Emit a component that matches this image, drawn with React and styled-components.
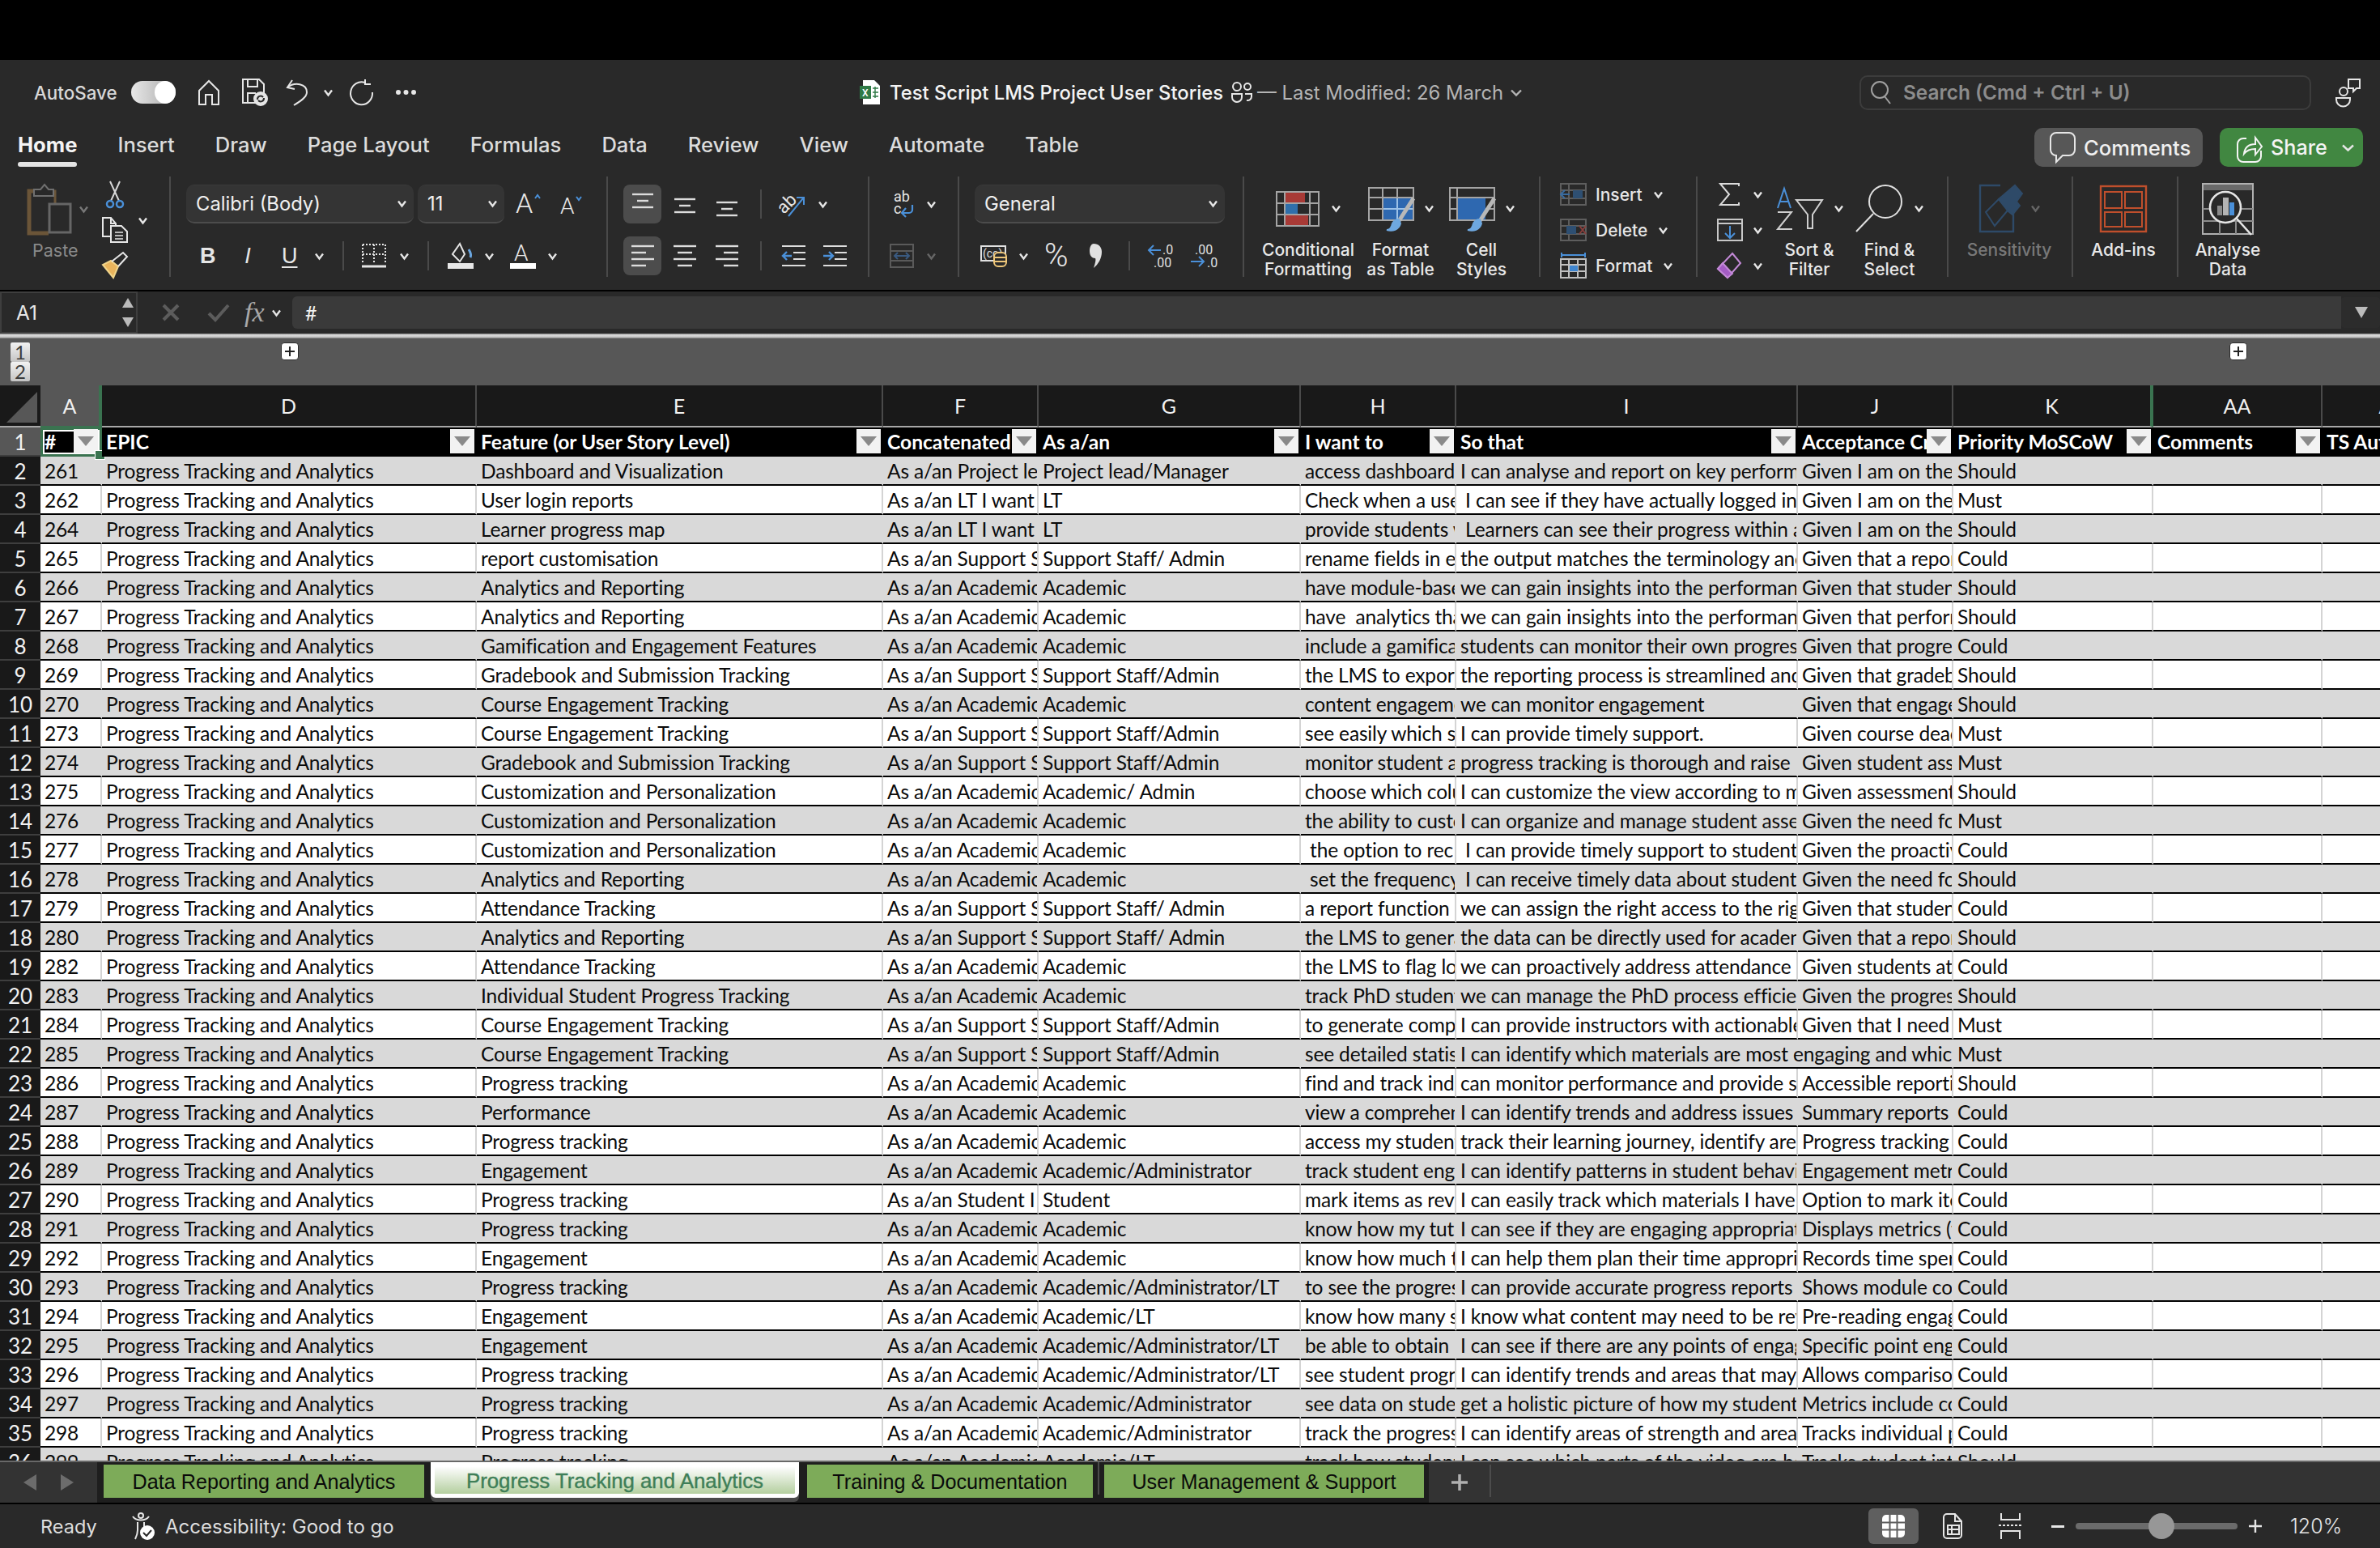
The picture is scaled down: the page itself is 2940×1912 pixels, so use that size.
import React from "react";
import styled, { createGlobalStyle } from "styled-components";

const COLUMNS = "50px 76px 463px 502px 192px 324px 192px 422px 192px 247px 209px 174px";
const UI_FONT = `Inter, "Noto Sans", sans-serif`;
const CELL_FONT = `Lato, "Noto Sans", sans-serif`;

const ac = "Academic";
const ss = "Support Staff/Admin";
const ss2 = "Support Staff/ Admin";
const aa = "Academic/Administrator";
const aal = "Academic/Administrator/LT";
const pt = "Progress tracking";
const cet = "Course Engagement Tracking";
const cap = "Customization and Personalization";
const ar = "Analytics and Reporting";

// id, feature, role, I want to, so that, acceptance, priority
const rows = [
    [261, "Dashboard and Visualization", "Project lead/Manager", "access dashboard", "I can analyse and report on key perform", "Given I am on the", "Should"],
    [262, "User login reports", "LT", "Check when a use", " I can see if they have actually logged in", "Given I am on the", "Must"],
    [264, "Learner progress map", "LT", "provide students w", " Learners can see their progress within a", "Given I am on the", "Should"],
    [265, "report customisation", ss2, "rename fields in e", "the output matches the terminology and", "Given that a repor", "Could"],
    [266, ar, ac, "have module-base", "we can gain insights into the performan", "Given that studen", "Should"],
    [267, ar, ac, "have  analytics tha", "we can gain insights into the performan", "Given that perforr", "Should"],
    [268, "Gamification and Engagement Features", ac, "include a gamifica", "students can monitor their own progres", "Given that progre", "Could"],
    [269, "Gradebook and Submission Tracking", ss, "the LMS to export", "the reporting process is streamlined and", "Given that gradeb", "Should"],
    [270, cet, ac, "content engageme", "we can monitor engagement", "Given that engage", "Should"],
    [273, cet, ss, "see easily which st", "I can provide timely support.", "Given course dead", "Must"],
    [274, "Gradebook and Submission Tracking", ss, "monitor student a", "progress tracking is thorough and raise", "Given student ass", "Must"],
    [275, cap, "Academic/ Admin", "choose which colu", "I can customize the view according to my", "Given assessment", "Should"],
    [276, cap, ac, "the ability to custo", "I can organize and manage student asse", "Given the need fo", "Must"],
    [277, cap, ac, " the option to rec", " I can provide timely support to student", "Given the proactiv", "Could"],
    [278, ar, ac, " set the frequency", " I can receive timely data about student", "Given the need fo", "Should"],
    [279, "Attendance Tracking", ss2, "a report function", "we can assign the right access to the righ", "Given that studen", "Could"],
    [280, ar, ss2, "the LMS to genera", "the data can be directly used for acaden", "Given that a repor", "Should"],
    [282, "Attendance Tracking", ac, "the LMS to flag lov", "we can proactively address attendance i", "Given students att", "Could"],
    [283, "Individual Student Progress Tracking", ac, "track PhD student", "we can manage the PhD process efficien", "Given the progres", "Should"],
    [284, cet, ss, "to generate comp", "I can provide instructors with actionable", "Given that I need", "Must"],
    [285, cet, ss, "see detailed statis", "I can identify which materials are most engaging and which", null, "Must"],
    [286, pt, ac, "find and track ind", "can monitor performance and provide s", "Accessible reporti", "Should"],
    [287, "Performance", ac, "view a comprehen", "I can identify trends and address issues", "Summary reports", "Could"],
    [288, pt, ac, "access my student", "track their learning journey, identify are", "Progress tracking", "Could"],
    [289, "Engagement", aa, "track student eng", "I can identify patterns in student behavi", "Engagement metr", "Could"],
    [290, pt, "Student", "mark items as rev", "I can easily track which materials I have", "Option to mark ite", "Could"],
    [291, pt, ac, "know how my tuto", "I can see if they are engaging appropriat", "Displays metrics (t", "Could"],
    [292, "Engagement", ac, "know how much t", "I can help them plan their time appropri", "Records time sper", "Could"],
    [293, pt, aal, "to see the progres", "I can provide accurate progress reports", "Shows module co", "Could"],
    [294, "Engagement", "Academic/LT", "know how many s", "I know what content may need to be rev", "Pre-reading engag", "Could"],
    [295, "Engagement", aal, "be able to obtain", "I can see if there are any points of engag", "Specific point eng", "Could"],
    [296, pt, aal, "see student progr", "I can identify trends and areas that may", "Allows compariso", "Could"],
    [297, pt, aa, "see data on stude", "get a holistic picture of how my students", "Metrics include co", "Could"],
    [298, pt, aa, "track the progress", "I can identify areas of strength and area", "Tracks individual p", "Could"],
    [299, pt, "Academic/LT", "track how student", "I can see which parts of the video are be", "Tracks student int", "Should"],
];

const headers = ["#", "EPIC", "Feature (or User Story Level)", "Concatenated", "As a/an", "I want to", "So that", "Acceptance Criteria", "Priority MoSCoW", "Comments", "TS Automated"];
const letters = ["A", "D", "E", "F", "G", "H", "I", "J", "K", "AA", "AB"];
const tabs = ["Home", "Insert", "Draw", "Page Layout", "Formulas", "Data", "Review", "View", "Automate", "Table"];

const GlobalStyle = createGlobalStyle`
    html, body {
        margin: 0;
        padding: 0;
        background: #000;
        overflow: hidden;
    }
    * {
        box-sizing: border-box;
    }
`;

const Page = styled.div`
    width: 2940px;
    height: 1912px;
    overflow: hidden;
    display: flex;
    flex-direction: column;
    background: #000;
    color: #e8e8e8;
    font-family: ${UI_FONT};
    padding-top: 74px;
`;

const IconSvg = styled.svg`
    display: block;
    flex: none;
    fill: none;
    overflow: visible;
    stroke: ${(p) => p.$color || "#e6e6e6"};
    stroke-width: 2;
    margin-left: ${(p) => p.$ml || 0}px;
    text {
        stroke: none;
        font-family: Roboto, sans-serif;
    }
`;

const Icon = ({ w, h, color, ml, children }) => (
    <IconSvg width={w} height={h} viewBox={`0 0 ${w} ${h}`} $color={color} $ml={ml}>
        {children}
    </IconSvg>
);

const Chevron = ({ ml, color, w = 11 }) => (
    <Icon w={w} h={9} ml={ml} color={color}>
        <path d={`M1 1.5l${w / 2 - 1} 6 ${w / 2 - 1}-6`} strokeWidth="2.4" />
    </Icon>
);

const Space = styled.span`
    display: block;
    flex: none;
    width: ${(p) => p.$w}px;
`;

/* title bar */

const TitleBar = styled.div`
    height: 80px;
    display: flex;
    align-items: center;
    background: #292929;
`;

const QuickAccess = styled.div`
    width: 1062px;
    flex: none;
    padding-left: 42px;
    display: flex;
    align-items: center;
`;

const AutoSave = styled.span`
    width: 120px;
    flex: none;
    font-size: 22.4px;
    font-weight: 500;
    color: #d8d8d8;
`;

const Toggle = styled.span`
    width: 55px;
    height: 28px;
    flex: none;
    margin-right: 27px;
    border-radius: 14px;
    display: flex;
    justify-content: flex-end;
    background: linear-gradient(90deg, #e8e8e8, #a8a8a8);
    &::after {
        content: "";
        width: 26px;
        height: 28px;
        border-radius: 50%;
        background: #fff;
    }
`;

const DocTitle = styled.div`
    width: 1235px;
    flex: none;
    display: flex;
    align-items: center;
    font-size: 23.8px;
    font-weight: 500;
    color: #f4f4f4;
`;

const Name = styled.span`
    margin-left: 11px;
    white-space: nowrap;
`;

const Modified = styled.span`
    margin-left: 6px;
    margin-right: 9px;
    white-space: nowrap;
    color: #b4b4b4;
    font-weight: 400;
`;

const Search = styled.div`
    width: 558px;
    height: 43px;
    flex: none;
    border: 2px solid #3c3c3c;
    border-radius: 10px;
    display: flex;
    align-items: center;
    gap: 15px;
    padding-left: 12px;
    font-size: 24.4px;
    font-weight: 600;
    color: #8c8c8c;
`;

/* ribbon tabs */

const TabRow = styled.div`
    height: 64px;
    padding: 4px 21px 0 22px;
    display: flex;
    align-items: flex-start;
    gap: 50px;
    background: #292929;
`;

const Tab = styled.div`
    height: 48px;
    position: relative;
    padding-top: 3px;
    line-height: 36px;
    font-size: 25.6px;
    font-weight: ${(p) => (p.$active ? 700 : 500)};
    color: ${(p) => (p.$active ? "#f4f4f4" : "#dcdcdc")};
    white-space: nowrap;
    &::after {
        content: "";
        display: ${(p) => (p.$active ? "block" : "none")};
        position: absolute;
        left: 0;
        right: 0;
        bottom: 0;
        height: 6px;
        border-radius: 3px;
        background: #e4e4e4;
    }
`;

const Comments = styled.div`
    margin-left: auto;
    width: 208px;
    height: 48px;
    border-radius: 10px;
    background: #575757;
    display: flex;
    align-items: center;
    gap: 10px;
    padding-left: 19px;
    font-size: 25.6px;
    font-weight: 500;
    color: #f0f0f0;
`;

const Share = styled.div`
    margin-left: -29px;
    width: 177px;
    height: 48px;
    border-radius: 10px;
    background: #418741;
    display: flex;
    align-items: center;
    gap: 11px;
    padding-left: 21px;
    font-size: 25.2px;
    font-weight: 500;
    color: #f4f4f4;
`;

/* ribbon */

const Ribbon = styled.div`
    height: 142px;
    padding-bottom: 18px;
    display: flex;
    background: #292929;
    border-bottom: 2px solid #000;
`;

const Group = styled.div`
    width: ${(p) => p.$w}px;
    flex: none;
    height: 124px;
    padding-left: ${(p) => p.$pl || 0}px;
    display: flex;
    align-items: flex-start;
    border-right: ${(p) => (p.$last ? "none" : "2px solid #4a4a4a")};
`;

const Stack = styled.div`
    display: flex;
    flex-direction: column;
    flex: none;
    width: ${(p) => (p.$w ? `${p.$w}px` : "auto")};
    margin-left: ${(p) => p.$ml || 0}px;
    padding-top: ${(p) => p.$top || 0}px;
    gap: ${(p) => p.$gap || 0}px;
`;

const Line = styled.div`
    display: flex;
    align-items: ${(p) => p.$align || "center"};
    height: ${(p) => (p.$h ? `${p.$h}px` : "auto")};
    gap: ${(p) => p.$gap || 0}px;
    padding-left: ${(p) => p.$pl || 0}px;
`;

const Select = styled.div`
    width: ${(p) => p.$w}px;
    height: 48px;
    flex: none;
    margin-right: ${(p) => p.$mr || 0}px;
    padding: 0 9px 0 12px;
    display: flex;
    align-items: center;
    justify-content: space-between;
    border-radius: 10px;
    background: #343434;
    border-bottom: 2px solid #4c4c4c;
    border-top: 1px solid #3a3a3a;
    font-size: 23.8px;
    color: #f0f0f0;
`;

const MiniDivider = styled.span`
    display: block;
    flex: none;
    width: 2px;
    height: 36px;
    margin-left: ${(p) => p.$ml}px;
    background: #4a4a4a;
`;

const AlignButton = styled.span`
    width: 47px;
    height: 48px;
    flex: none;
    border-radius: 8px;
    display: flex;
    align-items: center;
    justify-content: center;
    background: ${(p) => (p.$on ? "#4c4c4c" : "transparent")};
`;

const FontStyle = styled.span`
    display: block;
    flex: none;
    width: ${(p) => p.$w}px;
    margin-left: ${(p) => p.$ml || 0}px;
    font-family: "Liberation Sans", sans-serif;
    font-size: 27px;
    text-align: center;
    font-weight: ${(p) => (p.$bold ? 700 : 400)};
    font-style: ${(p) => (p.$italic ? "italic" : "normal")};
    text-decoration: ${(p) => (p.$under ? "underline" : "none")};
    text-underline-offset: 4px;
    color: #e6e6e6;
`;

const Glyph = styled.span`
    display: block;
    flex: none;
    margin-left: ${(p) => p.$ml}px;
    font-family: Roboto, sans-serif;
    font-weight: 300;
    font-size: 40px;
    line-height: 48px;
    color: #e6e6e6;
`;

const PasteLabel = styled.div`
    margin: 7px 0 0 6px;
    font-size: 21.5px;
    line-height: 28px;
    color: #8a8a8a;
`;

const BigButton = styled.div`
    width: ${(p) => p.$w}px;
    flex: none;
    display: flex;
    flex-direction: column;
    align-items: center;
`;

const BigIcon = styled.div`
    height: 79px;
    display: flex;
    align-items: center;
    gap: ${(p) => p.$gap || 0}px;
`;

const BigLabel = styled.div`
    font-size: 21px;
    font-weight: 500;
    line-height: 24px;
    text-align: center;
    white-space: pre;
    color: ${(p) => (p.$dim ? "#787878" : "#e8e8e8")};
`;

const SideLabel = styled.span`
    margin-left: 11px;
    margin-right: 14px;
    font-size: 21px;
    font-weight: 500;
    color: #e6e6e6;
`;

/* formula bar */

const FormulaBar = styled.div`
    height: 52px;
    display: flex;
    align-items: center;
    background: #292929;
`;

const NameBox = styled.div`
    width: 170px;
    height: 52px;
    flex: none;
    padding: 0 3px 0 18px;
    display: flex;
    align-items: center;
    justify-content: space-between;
    border: 2px solid #3e3e3e;
    font-size: 24.4px;
    color: #e8e8e8;
`;

const Spinner = styled.span`
    display: flex;
    flex-direction: column;
    gap: 12px;
`;

const FormulaTools = styled.div`
    width: 191px;
    flex: none;
    display: flex;
    align-items: center;
    padding-left: 30px;
`;

const FxText = styled.span`
    width: 30px;
    margin-left: 18px;
    margin-right: 4px;
    font-family: "Liberation Serif", serif;
    font-style: italic;
    font-size: 34px;
    color: #a8a8a8;
`;

const FormulaInput = styled.div`
    width: 2531px;
    height: 40px;
    flex: none;
    border-radius: 6px 0 0 6px;
    background: #3a3a3a;
    padding-left: 16px;
    display: flex;
    align-items: center;
    font-family: ${CELL_FONT};
    font-size: 25px;
    color: #f0f0f0;
`;

const FormulaDrop = styled.div`
    width: 48px;
    height: 38px;
    flex: none;
    background: #2c2c2c;
    border-radius: 4px;
    display: flex;
    align-items: center;
    padding-left: 17px;
`;

const LightRule = styled.div`
    height: 6px;
    background: linear-gradient(#7c7c7c, #dcdcdc 30%, #c8c8c8 70%, #777);
`;

/* outline bar */

const OutlineBar = styled.div`
    height: 58px;
    display: grid;
    grid-template-columns: ${COLUMNS};
    background: #575757;
`;

const OutlineSlot = styled.div`
    grid-column: ${(p) => p.$col};
    display: flex;
    justify-content: center;
    padding-top: 5px;
`;

const LevelStack = styled.div`
    display: flex;
    flex-direction: column;
    width: 24px;
`;

const LevelButton = styled.div`
    height: 24px;
    border-radius: 2px;
    background: linear-gradient(#f2f2f2, #c4c4c4);
    color: #3c3c3c;
    font-family: ${CELL_FONT};
    font-size: 24px;
    line-height: 24px;
    text-align: center;
`;

const PlusButton = styled.div`
    width: 22px;
    height: 22px;
    border-radius: 4px;
    border: 1px solid #2b2b2b;
    background: #fff;
    display: flex;
    align-items: center;
    justify-content: center;
`;

/* sheet */

const Sheet = styled.div`
    flex: 1;
    min-height: 0;
    overflow: hidden;
    width: 2940px;
    background: #fff;
    font-family: ${CELL_FONT};
`;

const SheetRow = styled.div`
    display: grid;
    grid-template-columns: ${COLUMNS};
    width: max-content;
`;

const Corner = styled.div`
    height: 52px;
    background: #191919;
    border-bottom: 2px solid #a8a8a8;
    padding: 8px 0 0 8px;
`;

const ColumnHead = styled.div`
    height: 52px;
    display: flex;
    align-items: center;
    justify-content: center;
    font-size: 25px;
    color: #f2f2f2;
    background: ${(p) => (p.$on ? "#575757" : "#191919")};
    border-bottom: 2px solid ${(p) => (p.$on ? "#3a7350" : "#a8a8a8")};
    border-right: ${(p) => (p.$on || p.$mark ? "4px solid #3a7350" : "2px solid #4a4a4a")};
`;

const RowHead = styled.div`
    height: 36px;
    font-size: 26px;
    line-height: 36px;
    text-align: center;
    color: #f2f2f2;
    background: ${(p) => (p.$on ? "#575757" : "#191919")};
    border-bottom: 2px solid #3e3e3e;
`;

const HeadCell = styled.div`
    height: 36px;
    padding: 2px 3px 0 5px;
    display: flex;
    position: relative;
    background: #000;
    color: #fff;
    font-size: 24.6px;
    font-weight: 700;
    ${(p) =>
        p.$selected &&
        `
        padding-right: 5px;
        box-shadow: inset 0 0 0 3px #3a7350, inset 0 0 0 5px #fff;
        &::after {
            content: "";
            position: absolute;
            right: -4px;
            bottom: -4px;
            width: 11px;
            height: 10px;
            background: #3a7350;
            border: 1px solid #fff;
        }
    `}
`;

const HeadLabel = styled.span`
    flex: 1;
    min-width: 0;
    overflow: hidden;
    white-space: nowrap;
    line-height: 32px;
`;

const FilterButton = styled.span`
    width: 30px;
    height: 30px;
    flex: none;
    background: #f2f2f2;
    display: flex;
    align-items: center;
    justify-content: center;
    &::after {
        content: "";
        border-left: 10px solid transparent;
        border-right: 10px solid transparent;
        border-top: 12px solid #8a8a8a;
    }
`;

const Cell = styled.div`
    height: 36px;
    min-width: 0;
    padding-left: 5px;
    overflow: hidden;
    white-space: pre;
    font-size: 24.5px;
    letter-spacing: -0.16px;
    line-height: 35px;
    color: #0b0b0b;
    background: ${(p) => (p.$shaded ? "#d9d9d9" : "#fff")};
    border-bottom: 2px solid #000;
    border-right: 2px solid ${(p) => (p.$shaded ? "#d9d9d9" : "#d4d4d4")};
    grid-column: ${(p) => (p.$wide ? "span 2" : "auto")};
`;

/* sheet tabs */

const TabBar = styled.div`
    height: 54px;
    flex: none;
    display: flex;
    align-items: flex-start;
    background: #1e1e1e;
    border-top: 2px solid #686868;
    border-bottom: 2px solid #000;
`;

const TabNav = styled.div`
    width: 120px;
    height: 50px;
    flex: none;
    margin-right: 8px;
    padding-left: 29px;
    display: flex;
    align-items: center;
    gap: 30px;
    background: #333;
`;

const SheetTab = styled.div`
    width: ${(p) => p.$w}px;
    height: 41px;
    flex: none;
    margin: 3px ${(p) => p.$mr || 0}px 0 0;
    padding-top: 1px;
    display: flex;
    align-items: center;
    justify-content: center;
    background: #7dab59;
    color: #0a0a0a;
    font-family: "Liberation Sans", sans-serif;
    font-size: 25.2px;
    white-space: nowrap;
`;

const ActiveSheetTab = styled(SheetTab)`
    height: 44px;
    margin-top: 0;
    border: 5px solid #fff;
    border-top-width: 6px;
    border-radius: 0 0 6px 6px;
    background: linear-gradient(#fdfdfd, #b4cf9f);
    color: #3f7f58;
    font-size: 25.8px;
    -webkit-text-stroke: 0.4px #3f7f58;
    box-shadow: 0 5px 0 #4a4a4a;
`;

const TabSeparator = styled.span`
    display: block;
    flex: none;
    width: 2px;
    height: 40px;
    background: #4c4c4c;
    margin-right: ${(p) => p.$mr}px;
`;

const AddTab = styled.div`
    flex: 1;
    height: 50px;
    display: flex;
    align-items: center;
    background: #333;
    padding-left: 28px;
`;

const AddSeparator = styled(TabSeparator)`
    margin: -4px 0 0 27px;
`;

/* status bar */

const StatusBar = styled.div`
    height: 54px;
    flex: none;
    display: flex;
    align-items: center;
    padding-left: 50px;
    background: #292929;
    font-size: 23.5px;
    color: #dedede;
`;

const Ready = styled.span`
    width: 112px;
    flex: none;
`;

const Accessibility = styled.span`
    margin-left: 13px;
    width: 2104px;
    flex: none;
    font-size: 24px;
`;

const ViewButton = styled.div`
    width: ${(p) => p.$w}px;
    height: 44px;
    flex: none;
    display: flex;
    align-items: center;
    justify-content: center;
    border-radius: 6px;
    background: ${(p) => (p.$on ? "#5f5f5f" : "transparent")};
`;

const Slider = styled.div`
    width: 200px;
    height: 8px;
    flex: none;
    margin: 0 14px;
    border-radius: 4px;
    background: #6b6b6b;
    display: flex;
    align-items: center;
    padding-left: 90px;
    &::after {
        content: "";
        width: 32px;
        height: 32px;
        flex: none;
        border-radius: 50%;
        background: #979797;
    }
`;

const Zoom = styled.span`
    margin-left: 35px;
    font-size: 25px;
    font-weight: 300;
    color: #e6e6e6;
`;

/* icons */

const PasteIcon = () => (
    <Icon w={54} h={60}>
        <path d="M22 8H2v52h24" stroke="#6b5538" strokeWidth="5" />
        <path d="M34 26V8H26" stroke="#6b5538" strokeWidth="3" />
        <path d="M8 14h24V6h-6l-5-6-5 6H8z" stroke="#6f6f6f" fill="#292929" />
        <rect x="27" y="24" width="26" height="35" stroke="#666" strokeWidth="3" fill="#292929" />
    </Icon>
);

const ScissorsIcon = () => (
    <Icon w={22} h={33}>
        <path d="M5 0l11 24M17 0L6 24" stroke="#d8d8d8" />
        <circle cx="5" cy="28" r="4" stroke="#4a90d9" strokeWidth="2.5" />
        <circle cx="17" cy="28" r="4" stroke="#4a90d9" strokeWidth="2.5" />
    </Icon>
);

const CopyIcon = () => (
    <Icon w={32} h={32}>
        <path d="M12 24H1V1h10l6 7v3" />
        <path d="M11 1v7h6" />
        <path d="M11 11h13l7 7v13H11z" />
        <path d="M16 19h10M16 23h10M16 27h10" strokeWidth="1.6" />
    </Icon>
);

const BrushIcon = () => (
    <Icon w={32} h={31}>
        <path d="M1 15l13 16 6-14-9-7z" fill="#e9b45c" stroke="#f0d48a" />
        <path d="M12 11l14-11 5 5-11 12" stroke="#e6e6e6" />
    </Icon>
);

const GrowIcon = ({ small }) => (
    <Icon w={small ? 28 : 32} h={30}>
        <text x="0" y={small ? 27 : 26} fontSize={small ? 28 : 34} fontWeight="300" fill="#e6e6e6">A</text>
        <path d={small ? "M20 6l3 4 3-4" : "M24 8l3-4 3 4"} stroke="#4a90d9" />
    </Icon>
);

const BorderIcon = () => (
    <Icon w={30} h={30}>
        <path d="M1 1h28M1 1v24M29 1v24M15 1v24M1 13h28" strokeDasharray="2 2" />
        <path d="M0 28h30" strokeWidth="3" />
    </Icon>
);

const FillIcon = () => (
    <Icon w={32} h={32}>
        <path d="M15 1L6 14l9 9 6-9z" />
        <path d="M26 8c3 5 3 8 2 10" stroke="#6aa6e0" strokeWidth="3" />
        <rect x="0" y="25" width="32" height="7" fill="#e8e8e8" stroke="none" />
    </Icon>
);

const ColorIcon = () => (
    <Icon w={32} h={32}>
        <text x="5" y="22" fontSize="28" fontWeight="300" fill="#e6e6e6">A</text>
        <rect x="0" y="25" width="32" height="7" fill="#fff" stroke="none" />
    </Icon>
);

const AlignIcon = ({ widths, align = "center", y = 0 }) => (
    <Icon w={28} h={28}>
        {widths.map((w, i) => {
            const x = align === "center" ? (28 - w) / 2 : align === "left" ? 0 : 28 - w;
            return <path key={i} d={`M${x} ${y + 2 + i * 8}h${w}`} strokeWidth="2.4" stroke="#dcdcdc" />;
        })}
    </Icon>
);

const OrientIcon = () => (
    <Icon w={33} h={34}>
        <text x="-4" y="22" fontSize="22" fill="#e6e6e6" transform="rotate(-45 10 16)">ab</text>
        <path d="M10 32L28 10M20 9h9v9" stroke="#4a90d9" />
    </Icon>
);

const IndentIcon = ({ more }) => (
    <Icon w={29} h={26}>
        <path d="M0 1h29M14 9h15M14 17h15M0 25h29" strokeWidth="2.2" stroke="#dcdcdc" />
        <path d={more ? "M0 13h11M7 8l5 5-5 5" : "M12 13H1M6 8l-5 5 5 5"} stroke="#4a90d9" strokeWidth="2.4" />
    </Icon>
);

const WrapIcon = () => (
    <Icon w={27} h={30}>
        <text x="1" y="12" fontSize="18" fill="#e6e6e6">ab</text>
        <text x="1" y="27" fontSize="18" fill="#e6e6e6">c</text>
        <path d="M24 16v6a4 4 0 0 1-4 4h-8M16 20l-5 6 5 5" stroke="#4a90d9" strokeWidth="2.2" />
    </Icon>
);

const MergeIcon = () => (
    <Icon w={30} h={30}>
        <path d="M1 1h28v28H1zM1 9h28M1 21h28" stroke="#5a5a5a" />
        <path d="M6 15h18M10 11l-4 4 4 4M20 11l4 4-4 4" stroke="#3a5a80" />
    </Icon>
);

const AccountingIcon = () => (
    <Icon w={33} h={26}>
        <path d="M20 19H1V1h30v10" stroke="#e0e0e0" />
        <text x="3" y="15" fontSize="14" fill="#e0e0e0">(cc)</text>
        <rect x="17" y="9" width="15" height="17" rx="5" fill="#292929" stroke="#eec77a" />
        <path d="M17 15h15M17 20h15" stroke="#eec77a" />
    </Icon>
);

const CommaIcon = () => (
    <Icon w={16} h={30}>
        <path d="M5 0c6 0 10 4 10 10 0 8-4 15-10 20 2-6 3-10 2-12-4 0-7-3-7-9 0-5 2-9 5-9z" fill="#e0e0e0" stroke="none" />
    </Icon>
);

const DecimalIcon = ({ less }) => (
    <Icon w={32} h={30}>
        {less ? (
            <>
                <text x="5" y="13" fontSize="16" fill="#e0e0e0">.00</text>
                <text x="20" y="29" fontSize="16" fill="#e0e0e0">.0</text>
                <path d="M0 22h16M10 16l6 6-6 6" stroke="#4a90d9" />
            </>
        ) : (
            <>
                <text x="18" y="13" fontSize="16" fill="#e0e0e0">.0</text>
                <text x="7" y="29" fontSize="16" fill="#e0e0e0">.00</text>
                <path d="M16 8H1M7 2L1 8l6 6" stroke="#4a90d9" />
            </>
        )}
    </Icon>
);

const GridLines = () => (
    <path d="M1 1h52v42H1zM1 15h52M1 29h52M11 1v42M42 1v42" stroke="#a4a4a4" />
);

const ConditionalIcon = () => (
    <Icon w={54} h={44}>
        <rect x="11" y="1" width="25" height="14" fill="#a83a36" stroke="none" />
        <rect x="11" y="15" width="16" height="14" fill="#2f6faa" stroke="none" />
        <rect x="11" y="29" width="29" height="14" fill="#a83a36" stroke="none" />
        <GridLines />
    </Icon>
);

const TableBrush = () => (
    <>
        <path d="M56 14L38 42" stroke="#b8b8b8" strokeWidth="5" />
        <path d="M38 40c-5 0-8 4-9 8-1 3-3 5-6 5 7 2 15 0 17-8z" fill="#6ea8e0" stroke="#6ea8e0" />
    </>
);

const FormatTableIcon = () => (
    <Icon w={61} h={54}>
        <path d="M1 1h55v40H1zM1 13h55M1 27h55M18 1v40M36 1v40" stroke="#a4a4a4" />
        <rect x="19" y="14" width="36" height="26" fill="#2e68b0" stroke="none" />
        <path d="M36 14v26M19 27h36" stroke="#9cc2e8" />
        <TableBrush />
    </Icon>
);

const CellStylesIcon = () => (
    <Icon w={61} h={54}>
        <path d="M1 1h55v40H1zM1 13h55M1 27h55M10 1v40" stroke="#a4a4a4" />
        <rect x="11" y="14" width="34" height="26" fill="#2e68b0" stroke="none" />
        <TableBrush />
    </Icon>
);

const InsertCellsIcon = () => (
    <Icon w={33} h={28}>
        <path d="M1 1h31v26H1zM1 9h31M1 19h31M11 1v26" stroke="#5e5e5e" />
        <rect x="16" y="9" width="12" height="10" fill="#2e4f72" stroke="none" />
        <path d="M12 14H1M6 9l-5 5 5 5" stroke="#3a6ca0" />
    </Icon>
);

const DeleteCellsIcon = () => (
    <Icon w={33} h={28}>
        <path d="M1 1h31v26H1zM1 9h31M1 19h31M11 1v26" stroke="#5e5e5e" />
        <rect x="8" y="9" width="12" height="10" fill="#2e4f72" stroke="none" />
        <path d="M24 9l8 10M32 9l-8 10" stroke="#8a3f3c" />
    </Icon>
);

const FormatCellsIcon = () => (
    <Icon w={33} h={32}>
        <path d="M1 8h31v23H1zM1 15h31M1 23h31M11 8v23M22 8v23" stroke="#c0c0c0" />
        <rect x="12" y="16" width="10" height="7" fill="#3f86d0" stroke="none" />
        <path d="M2 3h29M2 0v6M31 0v6" stroke="#4a90d9" />
    </Icon>
);

const SumIcon = () => (
    <Icon w={25} h={28}>
        <path d="M24 4V1H1l11 13L1 27h23v-3" stroke="#dcdcdc" />
    </Icon>
);

const FillDownIcon = () => (
    <Icon w={32} h={28}>
        <path d="M1 1h30v26H1zM1 6h30" stroke="#c8c8c8" />
        <path d="M16 9v15M10 18l6 6 6-6" stroke="#4a90d9" />
    </Icon>
);

const ClearIcon = () => (
    <Icon w={30} h={32}>
        <path d="M19 1l10 12-16 18L1 20z" stroke="#c48ad8" />
        <path d="M7 13l12 13-6 5L1 20z" fill="#a45cc4" stroke="#c48ad8" />
    </Icon>
);

const SortIcon = () => (
    <Icon w={58} h={52}>
        <path d="M2 25L10 1l8 24M5 17h10" stroke="#4a90d9" />
        <path d="M2 30h17L2 51h18" stroke="#cfcfcf" />
        <path d="M25 15h32L45 33v17h-6V33z" stroke="#cfcfcf" />
    </Icon>
);

const FindIcon = () => (
    <Icon w={59} h={59}>
        <ellipse cx="37" cy="21" rx="20" ry="20" stroke="#e0e0e0" />
        <path d="M22 36L1 58" stroke="#e0e0e0" />
    </Icon>
);

const SensitivityIcon = () => (
    <Icon w={55} h={59}>
        <path d="M26 1H1v57h41V36" stroke="#2e4a68" strokeWidth="2.4" />
        <path d="M8 34l16-16 11 14-16 19z" stroke="#2e4a68" />
        <path d="M24 18L44 1l9 10-7 10 4 5-9 11-5-4z" fill="#2e4a68" stroke="#2e4a68" />
    </Icon>
);

const AddInsIcon = () => (
    <Icon w={58} h={58}>
        <rect x="1" y="1" width="56" height="56" stroke="#c04f2c" strokeWidth="2.4" />
        <rect x="6" y="8" width="21" height="20" stroke="#c04f2c" />
        <rect x="31" y="8" width="21" height="20" stroke="#c04f2c" />
        <rect x="6" y="33" width="21" height="18" stroke="#c04f2c" />
        <rect x="31" y="33" width="21" height="18" stroke="#c04f2c" />
    </Icon>
);

const AnalyseIcon = () => (
    <Icon w={64} h={64}>
        <path d="M1 1h62v62H1z" stroke="#b0b0b0" />
        <rect x="2" y="2" width="60" height="7" fill="#6a6a6a" stroke="none" />
        <path d="M1 32h62M1 47h62M22 47v16M42 47v16" stroke="#8c8c8c" />
        <circle cx="29" cy="30" r="19" fill="#292929" stroke="#e6e6e6" strokeWidth="2.6" />
        <rect x="19" y="28" width="6" height="12" fill="#8a8a8a" stroke="none" />
        <rect x="26" y="18" width="7" height="22" fill="#b4b4b4" stroke="none" />
        <rect x="34" y="24" width="6" height="16" fill="#4a90d9" stroke="none" />
        <path d="M43 44l18 20" stroke="#e6e6e6" strokeWidth="2.6" />
    </Icon>
);

const BigTool = ({ w, gap, chevron = true, dim, label, children }) => (
    <BigButton $w={w}>
        <BigIcon $gap={gap}>
            {children}
            {chevron && <Chevron color={dim ? "#666" : "#e6e6e6"} />}
        </BigIcon>
        <BigLabel $dim={dim}>{label}</BigLabel>
    </BigButton>
);

function RibbonBar() {
    return (
        <Ribbon>
            <Group $w={211} $pl={34}>
                <Stack $w={80} $top={10}>
                    <Line $gap={10}>
                        <PasteIcon />
                        <Chevron color="#777" />
                    </Line>
                    <PasteLabel>Paste</PasteLabel>
                </Stack>
                <Stack $ml={12} $top={6}>
                    <Line $h={44} $pl={5} $align="flex-start">
                        <ScissorsIcon />
                    </Line>
                    <Line $h={44} $gap={13} $align="flex-start">
                        <CopyIcon />
                        <Chevron />
                    </Line>
                    <BrushIcon />
                </Stack>
            </Group>

            <Group $w={540} $pl={19}>
                <Stack $top={10} $gap={16}>
                    <Line>
                        <Select $w={281} $mr={5}>Calibri (Body)<Chevron /></Select>
                        <Select $w={107}>11<Chevron /></Select>
                        <Space $w={14} />
                        <GrowIcon />
                        <Space $w={23} />
                        <GrowIcon small />
                    </Line>
                    <Line $h={48} $pl={17}>
                        <FontStyle $w={16} $bold>B</FontStyle>
                        <FontStyle $w={12} $ml={37} $italic>I</FontStyle>
                        <FontStyle $w={18} $ml={36} $under>U</FontStyle>
                        <Chevron ml={23} />
                        <MiniDivider $ml={23} />
                        <Space $w={22} />
                        <BorderIcon />
                        <Chevron ml={17} />
                        <MiniDivider $ml={23} />
                        <Space $w={23} />
                        <FillIcon />
                        <Chevron ml={14} />
                        <Space $w={20} />
                        <ColorIcon />
                        <Chevron ml={15} />
                    </Line>
                </Stack>
            </Group>

            <Group $w={323} $pl={19}>
                <Stack $top={10} $gap={16}>
                    <Line $gap={5}>
                        <AlignButton $on><AlignIcon widths={[26, 14, 26]} /></AlignButton>
                        <AlignButton><AlignIcon widths={[26, 14, 26]} y={6} /></AlignButton>
                        <AlignButton><AlignIcon widths={[26, 14, 26]} y={10} /></AlignButton>
                        <MiniDivider $ml={13} />
                        <Space $w={13} />
                        <OrientIcon />
                        <Chevron ml={9} />
                    </Line>
                    <Line $gap={5}>
                        <AlignButton $on><AlignIcon widths={[28, 18, 28, 18]} align="left" /></AlignButton>
                        <AlignButton><AlignIcon widths={[28, 18, 28, 18]} /></AlignButton>
                        <AlignButton><AlignIcon widths={[28, 18, 28, 18]} align="right" /></AlignButton>
                        <MiniDivider $ml={13} />
                        <Space $w={15} />
                        <IndentIcon />
                        <Space $w={12} />
                        <IndentIcon more />
                    </Line>
                </Stack>
            </Group>

            <Group $w={111} $pl={25}>
                <Stack $top={10} $gap={16}>
                    <Line $h={48}>
                        <Space $w={4} />
                        <WrapIcon />
                        <Chevron ml={15} />
                    </Line>
                    <Line $h={48}>
                        <MergeIcon />
                        <Chevron ml={16} color="#666" />
                    </Line>
                </Stack>
            </Group>

            <Group $w={352} $pl={19}>
                <Stack $top={10} $gap={16}>
                    <Select $w={309}>General<Chevron /></Select>
                    <Line $h={48} $pl={7}>
                        <AccountingIcon />
                        <Chevron ml={15} />
                        <Glyph $ml={20}>%</Glyph>
                        <Space $w={26} />
                        <CommaIcon />
                        <MiniDivider $ml={32} />
                        <Space $w={22} />
                        <DecimalIcon />
                        <Space $w={21} />
                        <DecimalIcon less />
                    </Line>
                </Stack>
            </Group>

            <Group $w={366} $pl={16}>
                <BigTool w={126} gap={15} label={"Conditional\nFormatting"}><ConditionalIcon /></BigTool>
                <BigTool w={102} gap={9} label={"Format\nas Table"}><FormatTableIcon /></BigTool>
                <BigTool w={98} gap={9} label={"Cell\nStyles"}><CellStylesIcon /></BigTool>
            </Group>

            <Group $w={194} $pl={24}>
                <Stack>
                    <Line $h={44}><InsertCellsIcon /><SideLabel>Insert</SideLabel><Chevron /></Line>
                    <Line $h={44}><DeleteCellsIcon /><SideLabel>Delete</SideLabel><Chevron /></Line>
                    <Line $h={44}><FormatCellsIcon /><SideLabel>Format</SideLabel><Chevron /></Line>
                </Stack>
            </Group>

            <Group $w={310} $pl={24}>
                <Stack $w={66}>
                    <Line $h={44}><Space $w={3} /><SumIcon /><Chevron ml={17} /></Line>
                    <Line $h={44} $gap={13}><FillDownIcon /><Chevron /></Line>
                    <Line $h={44} $gap={15}><ClearIcon /><Chevron /></Line>
                </Stack>
                <BigTool w={96} gap={14} label={"Sort &\nFilter"}><SortIcon /></BigTool>
                <BigTool w={102} gap={14} label={"Find &\nSelect"}><FindIcon /></BigTool>
            </Group>

            <Group $w={154}>
                <BigTool w={150} gap={9} dim label="Sensitivity"><SensitivityIcon /></BigTool>
            </Group>

            <Group $w={130}>
                <BigTool w={124} chevron={false} label="Add-ins"><AddInsIcon /></BigTool>
            </Group>

            <Group $w={200} $last>
                <BigTool w={122} chevron={false} label={"Analyse\nData"}><AnalyseIcon /></BigTool>
            </Group>
        </Ribbon>
    );
}

function DataRow({ row, index }) {
    const [id, feature, role, want, soThat, acceptance, priority] = row;
    const shaded = index % 2 === 0;
    return (
        <SheetRow>
            <RowHead>{index + 2}</RowHead>
            <Cell $shaded={shaded}>{id}</Cell>
            <Cell $shaded={shaded}>Progress Tracking and Analytics</Cell>
            <Cell $shaded={shaded}>{feature}</Cell>
            <Cell $shaded={shaded}>{`As a/an ${role} I want to`.slice(0, 19)}</Cell>
            <Cell $shaded={shaded}>{role}</Cell>
            <Cell $shaded={shaded}>{want}</Cell>
            <Cell $shaded={shaded} $wide={acceptance === null}>{soThat}</Cell>
            {acceptance !== null && <Cell $shaded={shaded}>{acceptance}</Cell>}
            <Cell $shaded={shaded}>{priority}</Cell>
            <Cell $shaded={shaded} />
            <Cell $shaded={shaded} />
        </SheetRow>
    );
}

function App() {
    return (
        <Page>
            <GlobalStyle />
            <TitleBar>
                <QuickAccess>
                    <AutoSave>AutoSave</AutoSave>
                    <Toggle />
                    <Icon w={28} h={31}>
                        <path d="M2 13L14 1l12 12v17h-8V18h-8v12H2z" />
                    </Icon>
                    <Icon w={32} h={34} ml={27}>
                        <path d="M20 30H1V1h20l6 6v11" />
                        <path d="M7 1v9h12V1M7 30V18h10" />
                        <circle cx="23" cy="25" r="8" fill="#e6e6e6" />
                        <path d="M19 26a4 4 0 0 1 7-3M27 24a4 4 0 0 1-7 3" stroke="#292929" />
                    </Icon>
                    <Icon w={28} h={33} ml={22}>
                        <path d="M8 1L2 10l9 2" />
                        <path d="M2 10c9-7 24-5 24 6 0 6-8 11-16 16" />
                    </Icon>
                    <Chevron ml={19} />
                    <Icon w={30} h={32} ml={21}>
                        <path d="M19 4A13.500 14 0 1 0 28 16" />
                        <path d="M19 0v6h7" />
                    </Icon>
                    <Icon w={25} h={6} ml={27}>
                        <g fill="#e6e6e6" stroke="none">
                            <circle cx="3" cy="3" r="3" />
                            <circle cx="12.500" cy="3" r="3" />
                            <circle cx="22" cy="3" r="3" />
                        </g>
                    </Icon>
                </QuickAccess>
                <DocTitle>
                    <Icon w={26} h={30}>
                        <path d="M4 0h14l7 7v23H4z" fill="#fff" stroke="none" />
                        <rect x="0" y="7" width="14" height="16" fill="#2f7a46" stroke="none" />
                        <text x="3" y="20" fontSize="12" fill="#fff">X</text>
                        <path d="M16 10h7M16 15h7M16 20h7M19 8v14" stroke="#2f7a46" strokeWidth="1.4" />
                    </Icon>
                    <Name>Test Script LMS Project User Stories</Name>
                    <Icon w={26} h={26} ml={10}>
                        <circle cx="7" cy="6" r="5" />
                        <circle cx="20" cy="6" r="4" />
                        <path d="M1 15h12v4a6 6 0 0 1-12 0zM17 15h8v3a5 5 0 0 1-6 5" />
                    </Icon>
                    <Modified>— Last Modified: 26 March</Modified>
                    <Chevron w={14} color="#b4b4b4" />
                </DocTitle>
                <Search>
                    <Icon w={25} h={28} color="#a0a0a0">
                        <circle cx="11" cy="11" r="10" />
                        <path d="M17 19l7 9" />
                    </Icon>
                    Search (Cmd + Ctrl + U)
                </Search>
                <Icon w={31} h={34} ml={30}>
                    <circle cx="10" cy="16" r="5" />
                    <path d="M1 24h17v2a8 8 0 0 1-17 0zM16 1h14v11h-4l-4 4v-4h-6z" />
                </Icon>
            </TitleBar>

            <TabRow>
                {tabs.map((t, i) => (
                    <Tab key={t} $active={i === 0}>{t}</Tab>
                ))}
                <Comments>
                    <Icon w={32} h={38}>
                        <path d="M8 1h16a7 7 0 0 1 7 7v14a7 7 0 0 1-7 7H16l-8 8v-8a7 7 0 0 1-7-7V8a7 7 0 0 1 7-7z" />
                    </Icon>
                    Comments
                </Comments>
                <Share>
                    <Icon w={31} h={38} color="#f4f4f4">
                        <path d="M12 8H8a7 7 0 0 0-7 7v15a7 7 0 0 0 7 7h15a7 7 0 0 0 7-7v-7" />
                        <path d="M9 27c1-8 6-12 14-12V7l8 11-8 10v-7c-6 0-11 2-14 6z" />
                    </Icon>
                    Share
                    <Chevron w={15} ml={7} />
                </Share>
            </TabRow>

            <RibbonBar />

            <FormulaBar>
                <NameBox>
                    A1
                    <Spinner>
                        <Icon w={14} h={12} color="#bbb">
                            <path d="M7 0l7 12H0z" fill="#bbb" stroke="none" />
                        </Icon>
                        <Icon w={14} h={12} color="#bbb">
                            <path d="M7 12L0 0h14z" fill="#bbb" stroke="none" />
                        </Icon>
                    </Spinner>
                </NameBox>
                <FormulaTools>
                    <Icon w={22} h={22} color="#5c5c5c">
                        <path d="M2 2l18 18M20 2L2 20" strokeWidth="4" />
                    </Icon>
                    <Icon w={28} h={22} ml={34} color="#5c5c5c">
                        <path d="M2 12l8 8L26 2" strokeWidth="4" />
                    </Icon>
                    <FxText>fx</FxText>
                    <Chevron />
                </FormulaTools>
                <FormulaInput>#</FormulaInput>
                <FormulaDrop>
                    <Icon w={16} h={14} color="#bbb">
                        <path d="M0 0h16l-8 14z" fill="#bbb" stroke="none" />
                    </Icon>
                </FormulaDrop>
            </FormulaBar>
            <LightRule />

            <OutlineBar>
                <OutlineSlot $col={1}>
                    <LevelStack>
                        <LevelButton>1</LevelButton>
                        <LevelButton>2</LevelButton>
                    </LevelStack>
                </OutlineSlot>
                <OutlineSlot $col={3}>
                    <PlusButton>
                        <Icon w={12} h={12} color="#222"><path d="M6 0v12M0 6h12" /></Icon>
                    </PlusButton>
                </OutlineSlot>
                <OutlineSlot $col={11}>
                    <PlusButton>
                        <Icon w={12} h={12} color="#222"><path d="M6 0v12M0 6h12" /></Icon>
                    </PlusButton>
                </OutlineSlot>
            </OutlineBar>

            <Sheet>
                <SheetRow>
                    <Corner>
                        <Icon w={38} h={38}>
                            <path d="M38 0v38H0z" fill="#575757" stroke="none" />
                        </Icon>
                    </Corner>
                    {letters.map((l, i) => (
                        <ColumnHead key={l} $on={i === 0} $mark={l === "K"}>{l}</ColumnHead>
                    ))}
                </SheetRow>
                <SheetRow>
                    <RowHead $on>1</RowHead>
                    {headers.map((h, i) => (
                        <HeadCell key={h} $selected={i === 0}>
                            <HeadLabel>{h}</HeadLabel>
                            <FilterButton />
                        </HeadCell>
                    ))}
                </SheetRow>
                {rows.map((row, i) => (
                    <DataRow key={row[0]} row={row} index={i} />
                ))}
            </Sheet>

            <TabBar>
                <TabNav>
                    <Icon w={16} h={20}><path d="M16 0v20L0 10z" fill="#6c6c6c" stroke="none" /></Icon>
                    <Icon w={16} h={20}><path d="M0 0v20l16-10z" fill="#6c6c6c" stroke="none" /></Icon>
                </TabNav>
                <SheetTab $w={396} $mr={8}>Data Reporting and Analytics</SheetTab>
                <ActiveSheetTab $w={455} $mr={10}>Progress Tracking and Analytics</ActiveSheetTab>
                <SheetTab $w={353} $mr={6}>Training &amp; Documentation</SheetTab>
                <TabSeparator $mr={6} />
                <SheetTab $w={395} $mr={6}>User Management &amp; Support</SheetTab>
                <AddTab>
                    <Icon w={20} h={20} color="#b0b0b0"><path d="M10 0v20M0 10h20" strokeWidth="3.500" /></Icon>
                    <AddSeparator $mr={0} />
                </AddTab>
            </TabBar>

            <StatusBar>
                <Ready>Ready</Ready>
                <Icon w={29} h={34}>
                    <circle cx="12" cy="4" r="3" />
                    <path d="M2 5c4 6 16 6 20 0M8 12v10c0 5-2 9-3 11M16 12v6" />
                    <circle cx="20" cy="25" r="9" fill="#fff" stroke="none" />
                    <path d="M15 25l4 4 6-7" stroke="#292929" />
                </Icon>
                <Accessibility>Accessibility: Good to go</Accessibility>
                <ViewButton $w={62} $on>
                    <Icon w={28} h={28}>
                        <rect width="28" height="28" rx="5" fill="#fff" stroke="none" />
                        <path d="M9.500 0v28M18.500 0v28M0 9.500h28M0 18.500h28" stroke="#5f5f5f" strokeWidth="2" />
                    </Icon>
                </ViewButton>
                <ViewButton $w={84}>
                    <Icon w={24} h={32}>
                        <path d="M1 5a4 4 0 0 1 4-4h10l8 9v17a4 4 0 0 1-4 4H5a4 4 0 0 1-4-4z" />
                        <path d="M15 1v9h8" />
                        <path d="M6 15h14v11H6zM6 20h14M11 15v11" />
                    </Icon>
                </ViewButton>
                <ViewButton $w={60}>
                    <Icon w={30} h={32}>
                        <path d="M3 0v8h23V0M3 32V22h23v10" />
                        <path d="M0 15h30" strokeDasharray="3 2" />
                    </Icon>
                </ViewButton>
                <Icon w={16} h={3} ml={20}><path d="M0 1.500h16" strokeWidth="3" /></Icon>
                <Slider />
                <Icon w={16} h={16}><path d="M8 0v16M0 8h16" strokeWidth="2.400" /></Icon>
                <Zoom>120%</Zoom>
            </StatusBar>
        </Page>
    );
}

export default App;
